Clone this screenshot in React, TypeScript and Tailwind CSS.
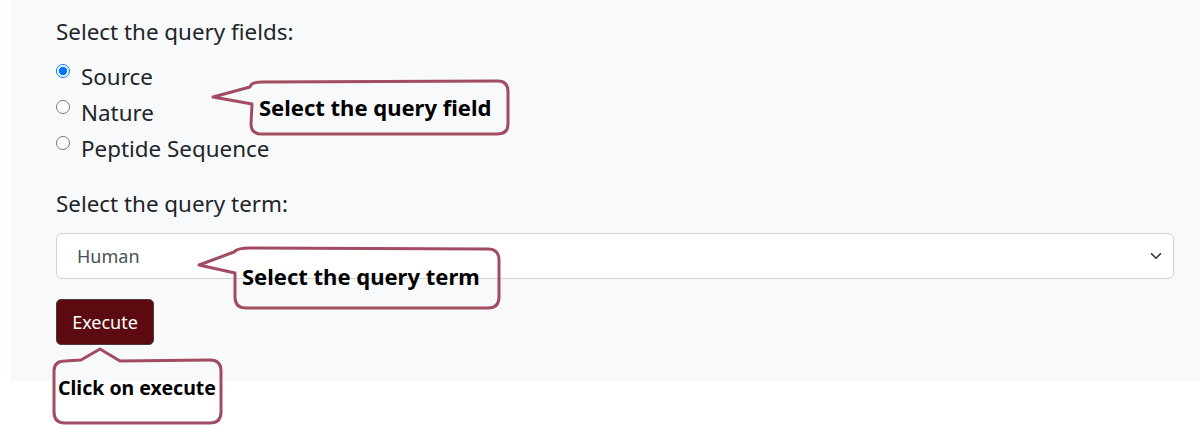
import React from "react";

const stroke = "#a24c61";

export default function App() {
  return (
    <div className="relative w-[1200px] h-[435px] bg-white overflow-hidden" style={{ fontFamily: '"Noto Sans", sans-serif' }}>
      <div className="ml-[11px] bg-[#f8f9fa] pl-[45px] pr-[26px] pt-[17px] pb-[36px] text-[#212529]">
        <div className="text-[22.4px] leading-[30px]">Select the query fields:</div>
        <div className="mt-[12px] flex flex-col">
          {["Source", "Nature", "Peptide Sequence"].map((t, i) => (
            <label key={t} className="flex items-center h-[36px] text-[22.4px]">
              <input
                type="radio"
                name="f"
                defaultChecked={i === 0}
                className="m-0 w-[14px] h-[14px] mr-[11px] -mt-[13px]"
              />
              <span>{t}</span>
            </label>
          ))}
        </div>
        <div className="mt-[22px] text-[22.4px] leading-[30px]">Select the query term:</div>
        <div className="mt-[14px] h-[46px] bg-white border border-[#ced4da] rounded-[6px] flex items-center justify-between pl-[20px] pr-[11px]">
          <span className="text-[18px] text-[#495057]">Human</span>
          <svg width="12" height="12" viewBox="0 0 16 16">
            <path d="M2 5l6 6 6-6" fill="none" stroke="#343a40" strokeWidth="2.2" strokeLinecap="round" strokeLinejoin="round" />
          </svg>
        </div>
        <button className="mt-[20px] w-[98px] h-[46px] bg-[#5c0a10] border border-[#4a3a3c] rounded-[5px] text-white text-[18px] flex items-center justify-center">
          Execute
        </button>
      </div>

      <svg className="absolute left-0 top-0 pointer-events-none" width="1200" height="435">
        <g fill="none" stroke={stroke} strokeWidth="3" strokeLinejoin="round">
          <path d="M213 97 L250 87 Q251 82 263 82 L498 81 Q508 81 508 92 L508 124 Q508 134 497 134 L262 134 Q251 134 251 124 L252 104 Z" />
          <path d="M199 265 L234 252 Q237 248 250 248 L488 249 Q499 249 499 260 L499 297 Q499 308 488 308 L246 308 Q235 308 235 297 L235 273 Z" />
          <path d="M100 349 L120 361 L210 360 Q221 360 221 371 L221 412 Q221 423 210 423 L65 423 Q54 423 54 412 L54 371 Q54 361 65 361 L81 360 Z" />
        </g>
      </svg>
      <div className="absolute left-[259px] top-[92px] text-[22px] leading-[30px] font-bold text-black">Select the query field</div>
      <div className="absolute left-[242px] top-[261px] text-[22px] leading-[30px] font-bold text-black">Select the query term</div>
      <div className="absolute left-[58px] top-[374px] text-[19.5px] leading-[28px] font-bold text-black">Click on execute</div>
    </div>
  );
}
